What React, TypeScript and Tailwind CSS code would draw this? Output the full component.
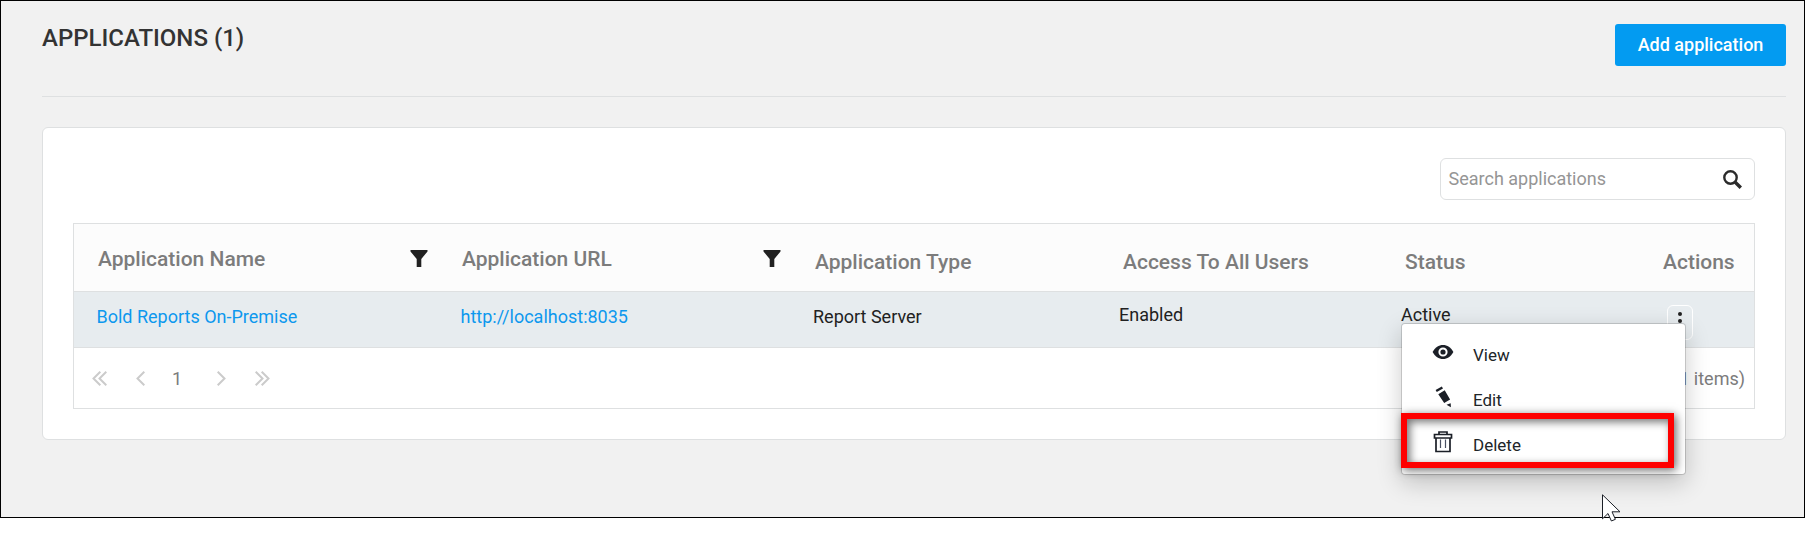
import React from "react";

const headCell = "flex items-center text-[21px] font-medium text-[#7c7c7c] whitespace-nowrap";
const cell = "flex items-center text-[18px] text-[#212121] whitespace-nowrap";
const columns = "grid grid-cols-[364px_353px_308px_282px_1fr_115px]";

function Funnel() {
  return (
    <svg width="18" height="18" viewBox="0 0 18 18" fill="#212121">
      <path d="M.5 0h17v1.500l-6.200 7.500v8H6.700V9L.5 1.500z" />
    </svg>
  );
}

function Chevron({ double, flip }: { double?: boolean; flip?: boolean }) {
  return (
    <svg
      width={double ? 15 : 9}
      height="15"
      viewBox={double ? "0 0 15 15" : "0 0 9 15"}
      fill="none"
      stroke="#cbcbcb"
      strokeWidth="2"
      className={flip ? "rotate-180" : ""}
    >
      <path d="M8.300.700 1.500 7.500l6.800 6.800" />
      {double && <path d="M14.300.700 7.500 7.500l6.800 6.800" />}
    </svg>
  );
}

function MenuItem({ icon, label }: { icon: React.ReactNode; label: string }) {
  return (
    <div className="flex h-[45px] items-center pl-[29px] text-[17px] text-[#212529]">
      <span className="flex w-[24px] justify-center pb-[6px]">{icon}</span>
      <span className="ml-[18px] pt-[2px]">{label}</span>
    </div>
  );
}

const Eye = (
  <svg width="22" height="14" viewBox="0 0 22 14">
    <path d="M.6 7C3 2.600 6.800 0 11 0s8 2.600 10.400 7C19 11.400 15.200 14 11 14S3 11.400.6 7z" fill="#1b1f27" />
    <circle cx="11" cy="7" r="3.600" fill="none" stroke="#fff" strokeWidth="2" />
  </svg>
);

const Pencil = (
  <svg width="17" height="22" viewBox="0 0 17 22" fill="#1b1f27">
    <path d="M.6 4 6.800.400l1.200 2-6.200 3.700zM3.300 8.200l6.400-3.900 5.400 9.200-5.900 3.500zM11.500 18.700l4.200-1.500.2 4z" />
  </svg>
);

const Trash = (
  <svg width="20" height="22" viewBox="0 0 20 22" fill="none" stroke="#1b1f27">
    <path d="M6 3V1h8v2M1.500 7V3.500h17V7zM3 7v13.500h14V7" strokeWidth="1.700" />
    <path d="M7.500 8.500v8.500M12.500 8.500v8.500" strokeWidth="1.200" stroke="#4a5062" />
  </svg>
);

export default function App() {
  return (
    <div className="h-[542px] w-[1805px] bg-white font-['Roboto',sans-serif]">
      <div className="relative flex h-[518px] flex-col border border-black bg-[#f1f1f1] pr-[18px] pl-[41px]">
        <header className="flex h-[96px] shrink-0 items-start justify-between border-b border-[#dee0e1] pt-[23px]">
          <h1 className="mt-[-1px] text-[24px] leading-[30px] font-medium text-[#333]">APPLICATIONS (1)</h1>
          <button className="h-[42px] w-[171px] rounded-[3px] bg-[#039bf1] pb-[2px] text-[18px] font-medium text-white">
            Add application
          </button>
        </header>
        <main className="mt-[30px] h-[313px] rounded-[6px] border border-[#dee0e1] bg-white px-[30px] pt-[30px]">
          <div className="ml-auto flex h-[42px] w-[315px] items-center justify-between rounded-[6px] border border-[#dee0e1] pr-[12px] pl-[7.500px]">
            <span className="pb-[2px] text-[18px] text-[#959595]">Search applications</span>
            <svg width="19" height="19" viewBox="0 0 19 19" fill="none" stroke="#2b2b2b">
              <circle cx="7.500" cy="7.500" r="6.200" strokeWidth="2.400" />
              <path d="m12 12 5.800 5.800" strokeWidth="3.400" />
            </svg>
          </div>
          <section className="mt-[23px] h-[186px] border border-[#dee0e1]">
            <div className={`${columns} h-[68px] border-b border-[#dee0e1] bg-[#fcfcfc]`}>
              <div className={`${headCell} justify-between pr-[10px] pl-[24px]`}>
                <span className="pt-[5px]">Application Name</span>
                <span className="pt-[3px]"><Funnel /></span>
              </div>
              <div className={`${headCell} justify-between pr-[10px] pl-[24px]`}>
                <span className="pt-[5px]">Application URL</span>
                <span className="pt-[3px]"><Funnel /></span>
              </div>
              <div className={`${headCell} pt-[11px] pl-[24px]`}>Application Type</div>
              <div className={`${headCell} pt-[11px] pl-[24px]`}>Access To All Users</div>
              <div className={`${headCell} pt-[11px] pl-[24px]`}>Status</div>
              <div className={`${headCell} pt-[11px] pl-[24px]`}>Actions</div>
            </div>
            <div className={`${columns} h-[56px] border-b border-[#dee0e1] bg-[#e7ecef]`}>
              <a className="flex items-center pb-[6px] pl-[22.500px] text-[18px] text-[#0d98ee]">Bold Reports On-Premise</a>
              <a className="flex items-center pb-[6px] pl-[22.500px] text-[18px] text-[#0d98ee]">http://localhost:8035</a>
              <div className={`${cell} pb-[6px] pl-[22px]`}>Report Server</div>
              <div className={`${cell} pb-[10px] pl-[20px]`}>Enabled</div>
              <div className={`${cell} pb-[10px] pl-[20px]`}>Active</div>
              <div className="pt-[13px] pl-[28px]">
                <div className="flex h-[35px] w-[26px] flex-col items-center gap-[3px] rounded-[6px] border border-white pt-[6px]">
                  <i className="size-[4px] rounded-full bg-[#212121]" />
                  <i className="size-[4px] rounded-full bg-[#212121]" />
                  <i className="size-[4px] rounded-full bg-[#212121]" />
                </div>
              </div>
            </div>
            <div className="flex h-[60px] items-center justify-between pr-[9px] pl-[18px] text-[18px] text-[#7c7c7c]">
              <div className="flex items-center">
                <Chevron double />
                <span className="ml-[29px] flex"><Chevron /></span>
                <span className="ml-[27px] w-[11px]">1</span>
                <span className="ml-[34px] flex"><Chevron flip /></span>
                <span className="ml-[29px] flex"><Chevron double flip /></span>
              </div>
              <span>1 of 1 pages (1 items)</span>
            </div>
          </section>
        </main>
        <div className="absolute top-[322px] left-[1400px] h-[152px] w-[285px] rounded-[4px] border border-black/15 bg-white bg-clip-padding py-[8px] shadow-[0_8px_24px_rgba(0,0,0,0.2)]">
          <MenuItem icon={Eye} label="View" />
          <MenuItem icon={Pencil} label="Edit" />
          <MenuItem icon={Trash} label="Delete" />
        </div>
        <div className="absolute top-[412px] left-[1400px] h-[55px] w-[273px] border-[6px] border-[#fe0000] shadow-[2px_2px_9px_rgba(0,0,0,0.6),inset_3px_3px_9px_rgba(0,0,0,0.55)]" />
        <svg className="absolute top-[493px] left-[1601px]" width="20" height="29" viewBox="0 0 20 29" fill="#fff" stroke="#1b1f27">
          <path d="M.5.800v24l5.500-5.300 3.400 7.500 4-1.700-3.400-7.500h8z" />
        </svg>
      </div>
    </div>
  );
}
